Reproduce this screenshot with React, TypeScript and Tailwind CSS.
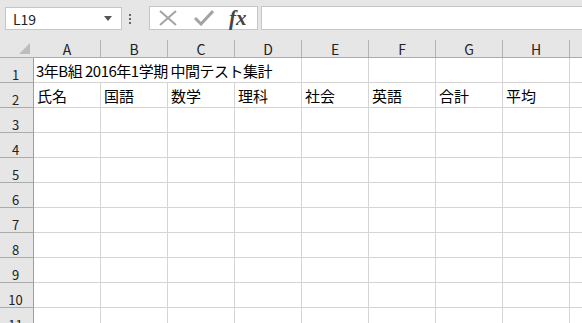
const cols = ["A", "B", "C", "D", "E", "F", "G", "H"];
const headings = ["氏名", "国語", "数学", "理科", "社会", "英語", "合計", "平均"];
const emptyRows = [3, 4, 5, 6, 7, 8, 9, 10, 11];

const cellFont = { fontFamily: '"Noto Sans CJK JP", "Liberation Sans", sans-serif' };

function RowHead({ n }: { n: number }) {
    return (
        <div className="h-[25px] bg-[#e6e6e6] border-r border-b border-r-[#9e9e9e] border-b-[#ababab] flex items-end justify-center pb-[1px] pr-[2px] text-[13px] leading-none text-[#222]">
            {n}
        </div>
    );
}

function Cell({ text, last }: { text?: string; last?: boolean }) {
    return (
        <div
            className={`h-[25px] border-b border-[#d4d4d4] flex items-end pl-[3px] pb-[4px] text-[15px] leading-none text-black whitespace-nowrap ${
                last ? "" : "border-r"
            }`}
        >
            {text}
        </div>
    );
}

export default function App() {
    return (
        <div
            className="w-[582px] h-[323px] overflow-hidden bg-white select-none"
            style={cellFont}
        >
            {/* FORMULA BAR */}
            <div className="h-[37px] bg-[#e6e6e6] flex items-start pt-[6px]">
                <div className="ml-[5px] mt-[1px] w-[117px] h-[23px] bg-white border border-[#c6c6c6] flex items-center pl-[7px] pr-[9px]">
                    <span className="text-[14px] leading-none text-[#222]">L19</span>
                    <svg className="ml-auto" width="8" height="5" viewBox="0 0 8 5">
                        <path d="M0 0 H8 L4 5 Z" fill="#555" />
                    </svg>
                </div>

                <div className="ml-[7px] mt-[8px] flex flex-col gap-[2px]">
                    <span className="w-[2px] h-[2px] bg-[#666]" />
                    <span className="w-[2px] h-[2px] bg-[#666]" />
                    <span className="w-[2px] h-[2px] bg-[#666]" />
                </div>

                <div className="ml-[18px] w-[109px] h-[24px] bg-white border border-[#c6c6c6] flex items-center">
                    <svg className="ml-[8px]" width="20" height="16" viewBox="0 0 20 16">
                        <path d="M2 1 L18 15 M18 1 L2 15" stroke="#a3a3a3" strokeWidth="2" />
                    </svg>
                    <svg className="ml-[16px]" width="20" height="16" viewBox="0 0 20 16">
                        <path d="M1 8 L7 14 L19 1" stroke="#a3a3a3" strokeWidth="3" fill="none" />
                    </svg>
                    <span
                        className="ml-[15px] text-[21px] leading-none italic font-bold text-[#444] mt-[1px]"
                        style={{ fontFamily: '"Liberation Serif", serif' }}
                    >
                        fx
                    </span>
                </div>

                <div className="ml-[3px] flex-1 h-[24px] bg-white border border-r-0 border-[#c6c6c6]" />
            </div>

            {/* SHEET */}
            <div className="grid grid-cols-[34px_repeat(8,67px)_1fr]">
                {/* column headers */}
                <div className="h-[21px] bg-[#e6e6e6] border-b border-[#ababab] flex items-end justify-end pr-[4px] pb-[3px]">
                    <svg width="11" height="11" viewBox="0 0 11 11">
                        <path d="M11 0 V11 H0 Z" fill="#bcbcbc" />
                    </svg>
                </div>
                {cols.map((c) => (
                    <div
                        key={c}
                        className="h-[21px] bg-[#e6e6e6] border-b border-[#ababab] flex"
                    >
                        <div className="flex-1 flex items-center justify-center pt-[3px] text-[14px] leading-none text-[#222]">
                            {c}
                        </div>
                        <div className="w-px mt-[3px] bg-[#b4b4b4]" />
                    </div>
                ))}
                <div className="h-[21px] bg-[#e6e6e6] border-b border-[#ababab]" />

                {/* row 1 */}
                <RowHead n={1} />
                <div className="col-span-4 h-[25px] border-r border-b border-[#d4d4d4] flex items-end pl-[2px] pb-[4px] text-[15px] leading-none whitespace-nowrap tracking-[-0.5px]">
                    3年B組 2016年1学期 中間テスト集計
                </div>
                <Cell />
                <Cell />
                <Cell />
                <Cell />
                <Cell last />

                {/* row 2 */}
                <RowHead n={2} />
                {headings.map((h) => (
                    <Cell key={h} text={h} />
                ))}
                <Cell last />

                {/* empty rows */}
                {emptyRows.map((r) => (
                    <div key={r} className="contents">
                        <RowHead n={r} />
                        {cols.map((c) => (
                            <Cell key={c} />
                        ))}
                        <Cell last />
                    </div>
                ))}
            </div>
        </div>
    );
}
